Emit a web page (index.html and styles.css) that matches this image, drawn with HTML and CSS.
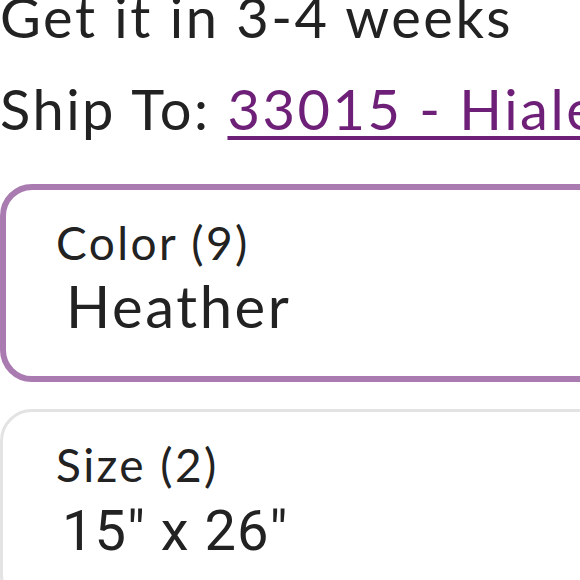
FILE: index.html
```html
<!DOCTYPE html>
<html lang="en">
<head>
<meta charset="utf-8">
<title>Shipping and options</title>
<link rel="stylesheet" href="styles.css">
</head>
<body>
<main class="panel">
  <p class="line delivery">Get it in 3-4 weeks</p>
  <p class="line ship">Ship To: <a class="zip" href="#">33015 - Hialeah, FL</a></p>

  <div class="picker picker-active">
    <div class="picker-label">Color (9)</div>
    <div class="picker-value">Heather</div>
  </div>

  <div class="picker">
    <div class="picker-label">Size (2)</div>
    <div class="picker-value picker-value-size">15" x 26"</div>
  </div>
</main>
</body>
</html>
```

FILE: styles.css
```css
html, body {
  margin: 0;
  padding: 0;
  background: #ffffff;
  overflow: hidden;
}

body {
  width: 580px;
  height: 580px;
  font-family: Lato, "Noto Sans", sans-serif;
  color: #222222;
}

.panel {
  margin-top: -29px;
  width: 760px;
}

.line {
  margin: 0;
  font-size: 56px;
  line-height: 92px;
  letter-spacing: 2.5px;
  white-space: nowrap;
}

.zip {
  color: #6e1f77;
  text-decoration: underline;
  text-decoration-thickness: 4px;
  text-underline-offset: 6px;
}

.picker {
  margin-top: 29px;
  box-sizing: border-box;
  height: 198px;
  border: 3px solid #e3e3e3;
  border-radius: 32px;
  padding: 30px 0 0 53px;
}

.picker-active {
  border: 6px solid #a97bb1;
  padding-left: 50px;
}

.picker + .picker {
  margin-top: 27px;
}

.picker-label {
  font-size: 46px;
  line-height: 1;
  letter-spacing: 2.4px;
}

.picker-value {
  margin-top: 11px;
  padding-left: 10px;
  font-size: 58px;
  line-height: 1;
  letter-spacing: 2.6px;
}

.picker-value-size {
  margin-top: 15px;
  padding-left: 6px;
  font-family: Roboto, "Noto Sans", sans-serif;
  font-size: 56px;
  letter-spacing: 1px;
}
```
